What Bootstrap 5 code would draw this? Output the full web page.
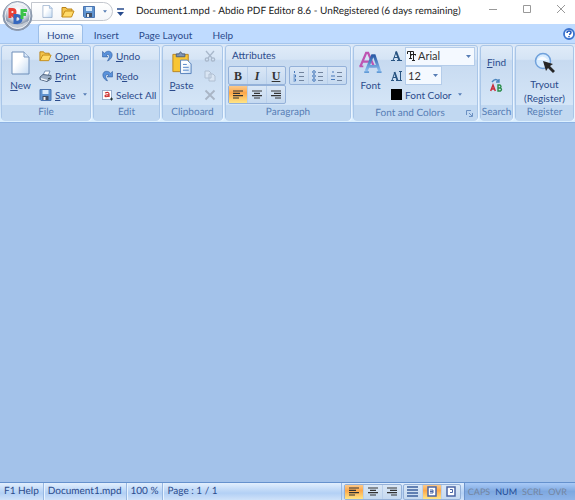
<!DOCTYPE html>
<html lang="en">
<head>
<meta charset="utf-8">
<meta name="viewport" content="width=device-width, initial-scale=1">
<title>Document1.mpd - Abdio PDF Editor 8.6</title>
<link href="https://cdn.jsdelivr.net/npm/bootstrap@5.3.0/dist/css/bootstrap.min.css" rel="stylesheet">
<style>
body{font-family:Lato,"Open Sans",sans-serif;font-size:10px;line-height:16px;text-rendering:geometricPrecision;color:#2b4b8c;background:#a3c2ea}
button{border:0;background:none;padding:0;color:inherit;white-space:nowrap;font:inherit}
svg{display:block;flex:none}
.titlebar{height:24px;background:#fff;color:#222}
.orb{left:2px;top:0;z-index:3}
.quick{height:19px;width:82px;margin-left:31px;margin-top:2px;padding-left:10px;border:1px solid #c3c7ce;border-radius:0 10px 10px 0;background:linear-gradient(#fff,#f4f6f9)}
.app-title{padding-left:12px;font-size:10px}
.window-keys{gap:24px;padding-right:9px;padding-bottom:6px}
.tabs{height:19px;background:#bfdbff;padding-left:38px}
.tab{height:19px;padding:2px 12px 0 11px}
.tab.active{background:linear-gradient(#f5faff,#dce9f8);border:1px solid #9dbfe9;border-bottom:0;border-radius:3px 3px 0 0;padding:1px 8px 0}
.ribbon{background:linear-gradient(#dbe8f7,#cbdef4 25%,#c8dcf3 70%,#dcf0ff);border-top:1px solid #a5c5ec;border-bottom:1px solid #8db2e3;padding:1px 1px 2px;gap:2px;height:80px}
.panel{border:1px solid #a9c6e8;border-radius:3px;background:linear-gradient(#dfebf8,#d5e4f5 18%,#c7daf0 20%,#d4e5f7 80%);box-shadow:1px 1px 0 #eaf4ff}
.panel-body{height:59px}
.panel-name{height:16px;line-height:15px;background:#c1d8f1;color:#567db5;border-radius:0 0 3px 3px;text-align:center;white-space:nowrap}
.p-file{flex:0 0 90px}.p-edit{flex:0 0 67px}.p-clip{flex:0 0 61px}.p-para{flex:0 0 126px}.p-font{flex:0 0 125px}.p-search{flex:0 0 33px}.p-reg{flex:1 0 58px}
.p-para .panel-body{padding:0 2px}
.tool-rows{display:grid;grid-template-rows:20px 19px 19px;align-items:center}
.tool{display:flex;align-items:center;gap:3px;height:19px}
.big{display:flex;flex-direction:column;align-items:center;justify-content:flex-start;gap:2px;padding-top:5px}
.two-line{line-height:14px}
.b-new{width:37px}.b-paste{width:37px}.b-font{width:33px}
.key-group{display:flex;width:58px;border:1px solid #94b1d9;border-radius:2px;background:linear-gradient(#dae7f6,#c5d9f0)}
.key-group button{flex:1 1 0;height:17px;display:flex;align-items:center;justify-content:center;border-right:1px solid #b9cfea}
.key-group button:last-child{border-right:0}
.key-group .on{background:linear-gradient(#fbc98b,#fda84a 40%,#ffe585)}
.key-rows{gap:3px}
.format{font-family:"Liberation Serif",serif;font-size:12px;font-weight:700;color:#333}
.pick{display:block;border:1px solid #b5cdea;background-color:#f4f9ff;height:19px;color:#333;appearance:none;padding:0 12px 0 2px;font:11px/16px Lato,"Open Sans",sans-serif;border-radius:0}
.pick-face{width:70px;padding-left:12px}.pick-size{width:37px}
.pick-mark{right:4px;top:8px;pointer-events:none}
.face-mark{left:2px;top:4px;pointer-events:none}
.status{height:18px;border-top:1px solid #6591cd;background:linear-gradient(#e2effe,#c5dcf8 35%,#b3d0f5 60%,#cfe2f9);line-height:17px;white-space:nowrap}
.cell{padding:0 4px;border-right:1px solid #98b8e2;box-shadow:1px 0 #e8f3ff}
.view-keys{gap:1px;padding:0 3px 0 2px;border-left:1px solid #98b8e2}
.view-keys .key-group button{height:14px}
.locks{font-size:9px;padding:0 8px 0 3px;gap:5px;color:#74859f;border-left:1px solid #6e94cc;background:linear-gradient(#a9caf7,#7ea8e0 50%,#8fb5e9)}
.locks .lit{color:#1d4a96}
</style>
<script src="https://cdn.jsdelivr.net/npm/bootstrap@5.3.0/dist/js/bootstrap.bundle.min.js"></script>
</head>
<body>
<svg width="0" height="0" class="position-absolute" aria-hidden="true">
<defs>
<linearGradient id="paper" x2="1" y2="1"><stop offset=".4" stop-color="#fff"/><stop offset="1" stop-color="#c3daf3"/></linearGradient>
<linearGradient id="blueA" x2="0" y2="1"><stop stop-color="#2c5ca8"/><stop offset="1" stop-color="#8cc0f2"/></linearGradient>
<radialGradient id="glass" cy=".3"><stop stop-color="#fff"/><stop offset=".65" stop-color="#dce2eb"/><stop offset="1" stop-color="#8796ad"/></radialGradient>
<symbol id="folder" viewBox="0 0 14 12"><path d="M1 11V1.500h4l1 1.500h5v3" fill="#f5c54c" stroke="#b98218"/><path d="M1 11 4 5h9l-2.500 6z" fill="#ffda6a" stroke="#c38a17"/></symbol>
<symbol id="disk" viewBox="0 0 12 12"><path d="M.5.500h11v11h-10l-1-1z" fill="#5f93cf" stroke="#4a74b0"/><path d="M3 1h6v4H3z" fill="#d7eafc"/><path d="M3 7h6v4H3z" fill="#3f4f68"/><path d="M4 8h2v3H4z" fill="#eee"/></symbol>
<symbol id="page" viewBox="0 0 19 24"><path d="M1 1h12l5 5v17H1z" fill="url(#paper)" stroke="#6f8fb9"/><path d="M13 1v5h5" fill="#dceafa" stroke="#7898c2"/></symbol>
<symbol id="down" viewBox="0 0 5 3"><path d="M0 0h5L2.500 3z" fill="#567db5"/></symbol>
<symbol id="left" viewBox="0 0 10 9"><path d="M0 1h10M0 3.300h7M0 5.600h10M0 8h6" stroke="#333" stroke-width="1.200"/></symbol>
<symbol id="center" viewBox="0 0 10 9"><path d="M0 1h10M2 3.300h6M0 5.600h10M2 8h6" stroke="#333" stroke-width="1.200"/></symbol>
<symbol id="right" viewBox="0 0 10 9"><path d="M0 1h10M3 3.300h7M0 5.600h10M4 8h6" stroke="#333" stroke-width="1.200"/></symbol>
<symbol id="undo" viewBox="0 0 12 12"><path d="M.5 1v6h6L4.500 5C7 3.500 8.500 5 8 7.500L6 11.500C12 9 12.500 2.500 8.500 1 6 .2 4 1.500 2.700 3z" fill="#5a92db" stroke="#2b5799" stroke-width=".6"/></symbol>
</defs></svg>
<div class="d-flex flex-column min-vh-100 position-relative">
<button class="orb position-absolute" aria-label="Application menu"><svg width="31" height="32" viewBox="0 0 31 32"><circle cx="15.500" cy="16" r="14.500" fill="url(#glass)" stroke="#8c99ad"/><circle cx="15.500" cy="16" r="12.500" fill="none" stroke="#fff" opacity=".8"/><path d="M5 21q10 7 21 0-3 8-10.500 8T5 21" fill="#fff" opacity=".5"/><g fill="none" stroke-width="3"><path d="M8 18V9.500h2.500a2.300 2.300 0 0 1 0 5H8m2 0 4 4" stroke="#ea3f36"/><path d="M13 15.500v7h2q4-.5 4-3.500t-4-3.500z" stroke="#3568bf"/><path d="M20 19v-8.500h5M20 14.500h4" stroke="#3cc34a"/></g></svg></button>
<header class="titlebar d-flex align-items-start">
<div class="quick d-flex align-items-center gap-2">
<button aria-label="New"><svg width="11" height="13"><use href="#page"/></svg></button>
<button aria-label="Open"><svg width="14" height="12"><use href="#folder"/></svg></button>
<button aria-label="Save" class="d-flex align-items-center gap-2"><svg width="12" height="12"><use href="#disk"/></svg><svg width="4" height="3"><use href="#down"/></svg></button>
</div>
<button class="ms-1 mt-2" aria-label="Customize toolbar"><svg width="7" height="9"><path d="M0 1h7" stroke="#274b8d" stroke-width="1.500"/><path d="M0 4h7L3.500 8z" fill="#274b8d"/></svg></button>
<h1 class="app-title mb-0 fw-normal flex-grow-1 text-nowrap lh-base pt-1">Document1.mpd - Abdio PDF Editor 8.6 - UnRegistered (6 days remaining)</h1>
<div class="window-keys d-flex align-self-center">
<button aria-label="Minimize"><svg width="10" height="10"><path d="M1 5.500h8" stroke="#999"/></svg></button>
<button aria-label="Maximize"><svg width="10" height="10"><path d="M1.500 1.500h7v7h-7z" fill="none" stroke="#999"/></svg></button>
<button aria-label="Close"><svg width="10" height="10"><path d="m1 1 8 8M9 1 1 9" stroke="#999"/></svg></button>
</div>
</header>
<nav class="tabs d-flex align-items-start" aria-label="Ribbon tabs">
<button class="tab active">Home</button><button class="tab">Insert</button><button class="tab ps-2">Page Layout</button><button class="tab ps-2">Help</button>
<button class="ms-auto mt-1" aria-label="Help topics"><svg width="12" height="12"><circle cx="6" cy="6" r="5" fill="#fff" stroke="#3b73ce" stroke-width="1.800"/><path d="M4 5q0-2 2-2t2 1.500Q8 6 6 6.500M6 8v1.200" fill="none" stroke="#2158bf" stroke-width="1.500"/></svg></button>
</nav>
<main class="d-flex flex-column flex-grow-1">
<div class="ribbon d-flex">
<section class="panel p-file"><div class="panel-body d-flex">
<button class="big b-new"><svg width="19" height="24"><use href="#page"/></svg><span><u>N</u>ew</span></button>
<div class="tool-rows"><button class="tool"><svg width="13" height="12"><use href="#folder"/></svg><span><u>O</u>pen</span></button>
<button class="tool"><svg width="13" height="12" viewBox="0 0 13 12"><path d="M4 5 6 1h5L9 6z" fill="#fff" stroke="#7792b5"/><path d="m1 7 3-2.500 8 1V9L8 11.500l-7-2z" fill="#9caec5" stroke="#526783"/><path d="m2 8 6 1.700V11L2 9.500z" fill="#f2f7fd"/><path d="m9 9 2-1" stroke="#233"/></svg><span><u>P</u>rint</span></button>
<button class="tool"><svg width="13" height="12"><use href="#disk"/></svg><span><u>S</u>ave</span><svg class="ms-1" width="4" height="3"><use href="#down"/></svg></button></div>
</div><div class="panel-name">File</div></section>
<section class="panel p-edit"><div class="panel-body ps-2"><div class="tool-rows">
<button class="tool"><svg width="11" height="12"><use href="#undo"/></svg><span><u>U</u>ndo</span></button>
<button class="tool"><svg width="11" height="12" viewBox="0 0 12 12"><g transform="matrix(-1 0 0 1 12 0)"><use href="#undo" width="12" height="12"/></g></svg><span>R<u>e</u>do</span></button>
<button class="tool"><svg width="11" height="12"><path d="M.5 1.500h9v9h-9z" fill="#fff" stroke="#4c6ea0" stroke-dasharray="1 1"/><path d="M3 4q4-1.500 4 1v3M7 6Q3 5.500 3 7t4 0" fill="none" stroke="#cc2929" stroke-width="1.200"/><path d="M8 10h3M9.500 8.500v3" stroke="#233"/></svg><span>Select All</span></button>
</div></div><div class="panel-name">Edit</div></section>
<section class="panel p-clip"><div class="panel-body d-flex">
<button class="big b-paste"><svg width="22" height="24" viewBox="0 0 22 25"><path d="M1.500 3.500h16v18h-16z" fill="#f8c534" stroke="#b98524"/><path d="M5 6V3h3q1.500-4 3 0h3v3z" fill="#7f95b4" stroke="#4c607e"/><path d="M9.500 9.500h7l4 4v10h-11z" fill="url(#paper)" stroke="#5681bb"/><path d="M12 14h4M12 17h6M12 20h6" stroke="#5284c8"/></svg><span><u>P</u>aste</span></button>
<div class="tool-rows ps-1"><button class="tool" aria-label="Cut"><svg width="12" height="12" fill="none" stroke="#a9b8cb" stroke-width="1.300"><path d="m2 1 6 7M10 1 4 8"/><circle cx="3" cy="9.500" r="1.700"/><circle cx="9" cy="9.500" r="1.700"/></svg></button>
<button class="tool" aria-label="Copy"><svg width="12" height="12" fill="#d9e5f3" stroke="#b0bfd2"><path d="M1 1h4l2 2v5H1zM5 4h4l2 2v5H5z"/></svg></button>
<button class="tool" aria-label="Delete"><svg width="12" height="12"><path d="m1.500 1.500 9 9M10.500 1.500l-9 9" stroke="#a9b5c5" stroke-width="1.800"/></svg></button></div>
</div><div class="panel-name">Clipboard</div></section>
<section class="panel p-para"><div class="panel-body"><div class="tool-rows"><span class="ps-1">Attributes</span>
<div class="key-rows d-flex">
<div class="key-group format"><button>B</button><button><i>I</i></button><button><u>U</u></button></div>
<div class="key-group">
<button aria-label="Numbered list"><svg width="12" height="12"><path d="M1.500 1v2M.5 5h2v2h-2M.5 9h2v2h-2" fill="none" stroke="#4779ba"/><path d="M6 2.500h5M6 6.500h5M6 10.500h5" stroke="#71839d"/></svg></button>
<button aria-label="Bulleted list"><svg width="12" height="12"><g fill="none" stroke="#4779ba"><circle cx="2" cy="2" r="1.300"/><circle cx="2" cy="6" r="1.300"/><circle cx="2" cy="10" r="1.300"/></g><path d="M6 2.500h5M6 6.500h5M6 10.500h5" stroke="#71839d"/></svg></button>
<button aria-label="Multilevel list"><svg width="12" height="12"><path d="M2 1v2M1 5v2M3 5v2M0 9.500h4" stroke="#4779ba"/><path d="M6 2.500h5M6 6.500h5M6 10.500h5" stroke="#71839d"/></svg></button></div></div>
<div class="key-group"><button class="on" aria-label="Align left"><svg width="10" height="9"><use href="#left"/></svg></button><button aria-label="Center"><svg width="10" height="9"><use href="#center"/></svg></button><button aria-label="Align right"><svg width="10" height="9"><use href="#right"/></svg></button></div>
</div></div><div class="panel-name">Paragraph</div></section>
<section class="panel p-font"><div class="panel-body d-flex">
<button class="big b-font"><svg width="23" height="24" viewBox="0 0 23 25"><path d="M1 16 7 2h2l6 14M4 11h8" fill="none" stroke="#be55b2" stroke-width="2.400"/><path d="M0 16h4M11 16h5" stroke="#be55b2" stroke-width="2"/><path d="m7 21 6.500-16h2L21 21M10 16h8" fill="none" stroke="url(#blueA)" stroke-width="3"/><path d="M5 22h5M18 22h5" stroke="#619bd7" stroke-width="2"/></svg><span>Font</span></button>
<div class="tool-rows ps-1"><label class="tool"><svg width="11" height="12"><path d="M2 10.500 5.300 1.500M3 7.500h5M0 10.500h4M6 10.500h5" fill="none" stroke="#285482"/><path d="M5 1.500 8.500 10.500" stroke="#285482" stroke-width="2"/></svg><span class="position-relative"><svg class="face-mark position-absolute" width="9" height="10"><path d="M.5 3V.500h6V3M3.500.500V7M2 7.500h3M4 5V3.500h5V5M6.500 3.500V9M5 9.500h3" fill="none" stroke="#222"/></svg><select class="pick pick-face" aria-label="Font face"><option>Arial</option></select><svg class="pick-mark position-absolute" width="5" height="3"><use href="#down"/></svg></span></label>
<label class="tool"><svg width="11" height="12"><path d="M1 10.500 3.800 2M2 7.500h4M0 10.500h3M5 10.500h3" fill="none" stroke="#285482"/><path d="M3.500 2 6.500 10.500" stroke="#285482" stroke-width="1.800"/><path d="M9.500 1.500v9M8 1.500h3M8 10.500h3" stroke="#285482"/></svg><span class="position-relative"><select class="pick pick-size" aria-label="Font size"><option>12</option></select><svg class="pick-mark position-absolute" width="5" height="3"><use href="#down"/></svg></span></label>
<button class="tool"><svg width="11" height="11"><path d="M0 0h11v11H0z"/></svg><span>Font Color</span><svg class="ms-1" width="4" height="3"><use href="#down"/></svg></button></div>
</div><div class="panel-name d-flex align-items-center"><span class="flex-grow-1">Font and Colors</span><button aria-label="Font dialog"><svg class="me-1" width="7" height="7"><path d="M.5 5V.500H5M3 3l3 3M6.500 3v3.500H3" fill="none" stroke="#6b90c2"/></svg></button></div></section>
<section class="panel p-search"><div class="panel-body d-flex flex-column align-items-center pt-2 gap-2">
<button><u>F</u>ind</button><button aria-label="Replace"><svg width="13" height="14"><path d="M2 4q4-5 7 0M9 1v3H6" fill="none" stroke="#4a84bd" stroke-width="1.400"/><path d="m.7 13 2.300-6 2.300 6M1.500 11h3" fill="none" stroke="#c92c38" stroke-width="1.500"/><path d="M8 7v6h2.500q2-1.500 0-3H8h2q2-1.500 0-3z" fill="none" stroke="#288c48" stroke-width="1.400"/></svg></button>
</div><div class="panel-name">Search</div></section>
<section class="panel p-reg"><div class="panel-body d-flex justify-content-center"><button class="big"><svg width="22" height="24" viewBox="0 -1 22 24"><circle cx="9" cy="9" r="7.500" fill="#d6ebff" stroke="#70a1db" stroke-width="1.500"/><path d="M3 8q5-7 11 0" fill="#fff" opacity=".8"/><path d="m9 9 10 3-3 2 5 5-2 2-5-5-2 3z" fill="#262626"/></svg><span class="two-line">Tryout<br>(Register)</span></button></div><div class="panel-name">Register</div></section>
</div>
<div class="flex-grow-1"></div>
</main>
<footer class="status d-flex">
<span class="cell">F1 Help</span><span class="cell">Document1.mpd</span><span class="cell">100 %</span><span class="ps-1">Page : 1 / 1</span>
<div class="view-keys ms-auto d-flex align-items-center">
<div class="key-group"><button class="on" aria-label="Left"><svg width="10" height="9"><use href="#left"/></svg></button><button aria-label="Middle"><svg width="10" height="9"><use href="#center"/></svg></button><button aria-label="Right"><svg width="10" height="9"><use href="#right"/></svg></button></div>
<div class="key-group"><button aria-label="Page width"><svg width="11" height="11"><path d="M0 1h11M0 4h11M0 7h11M0 10h11" stroke="#3d609d" stroke-width="1.500"/></svg></button><button class="on" aria-label="Whole page"><svg width="10" height="11"><path d="M1 1h8v9H1z" fill="#fff" stroke="#4964a4" stroke-width="1.500"/><path d="M3 4h3v3H3M6 5.500H3" fill="none" stroke="#4964a4"/></svg></button><button aria-label="Actual size"><svg width="10" height="11"><path d="M1 1h8v9H1z" fill="#fff" stroke="#4964a4" stroke-width="1.500"/><path d="M4 3.500h2.500v3H4" fill="none" stroke="#4964a4"/></svg></button></div>
</div>
<div class="locks d-flex"><span>CAPS</span><span class="lit">NUM</span><span>SCRL</span><span>OVR</span></div>
</footer>
</div>
</body>
</html>
